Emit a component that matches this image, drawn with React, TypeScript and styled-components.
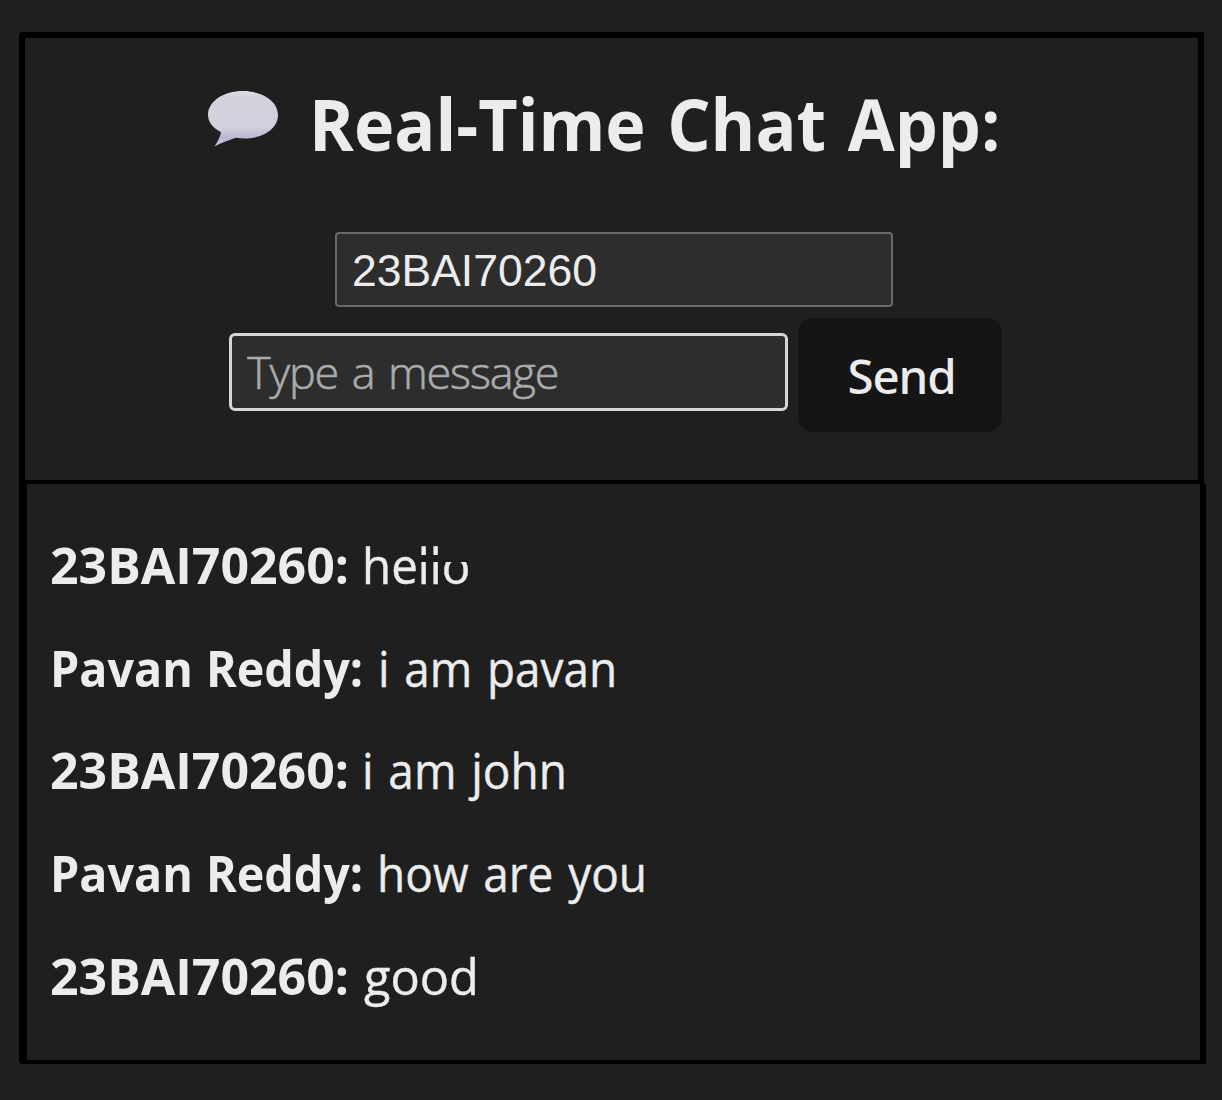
import React from "react";
import styled, { createGlobalStyle } from "styled-components";

const colors = {
  page: "#1f1f1f",
  field: "#2d2d2d",
  text: "#ececed",
  line: "#000000",
};

const GlobalStyle = createGlobalStyle`
  * { box-sizing: border-box; }
  body {
    margin: 0;
    background: ${colors.page};
    color: ${colors.text};
    font-family: "Open Sans", "Noto Sans", sans-serif;
  }
`;

const Page = styled.main`
  display: flex;
  flex-direction: column;
  align-items: flex-start;
  width: 1222px;
  height: 1100px;
  padding: 32px 0 0 19px;
  background: ${colors.page};
`;

const Header = styled.header`
  width: 1185px;
  height: 452px;
  padding-top: 37px;
  border: 6px solid ${colors.line};
  border-bottom-width: 4px;
  border-top-left-radius: 3px;
`;

const TitleRow = styled.div`
  display: flex;
  gap: 31px;
  height: 96px;
  padding-left: 183px;
`;

const Bubble = styled.svg`
  flex: none;
  width: 70px;
  height: 58px;
  margin-top: 15px;
`;

const Title = styled.h1`
  margin: 1px 0 0;
  font-size: 71px;
  font-weight: 700;
  line-height: 96px;
  word-spacing: 4px;
  white-space: nowrap;
  transform: scaleX(0.96);
  transform-origin: left;
`;

const NameRow = styled.div`
  display: flex;
  padding: 61px 0 0 310px;
`;

const ComposeRow = styled.div`
  display: flex;
  align-items: flex-start;
  gap: 10px;
  padding: 11px 0 0 204px;
`;

const Field = styled.input`
  height: 75px;
  width: 558px;
  padding: 3px 15px 0;
  border: 2px solid #686868;
  border-radius: 4px;
  outline: none;
  background: ${colors.field};
  color: ${colors.text};
  font: 400 44.5px "Liberation Sans", Arial, sans-serif;
`;

const MessageField = styled(Field)`
  width: 559px;
  height: 78px;
  margin-top: 15px;
  padding: 0 15px 1px;
  border: 3px solid #d6d6d6;
  border-radius: 6px;
  font: 300 45px "Open Sans", "Noto Sans", sans-serif;
  letter-spacing: -1.15px;
  word-spacing: 3px;

  &::placeholder {
    color: #a9abad;
    opacity: 1;
    -webkit-text-stroke: 0.6px #a9abad;
  }
`;

const SendButton = styled.button`
  width: 204px;
  height: 114px;
  padding: 0 0 0 3px;
  border: 0;
  border-radius: 15px;
  background: #151515;
  color: ${colors.text};
  font: 500 47.5px "Noto Sans", "Open Sans", sans-serif;
  letter-spacing: -1.1px;
`;

const Messages = styled.section`
  width: 1187px;
  height: 580px;
  padding: 30px 0 0 23px;
  border: 0 solid ${colors.line};
  border-width: 0 6px 4px 8px;
  border-bottom-left-radius: 4px;
`;

const MessageRow = styled.div`
  display: flex;
  height: 102.67px;
  font-size: 50px;
  line-height: 102.67px;
  white-space: nowrap;
`;

const Sender = styled.strong<{ $narrow?: boolean }>`
  flex: none;
  width: ${(p) => (p.$narrow ? 327 : 312)}px;
  font-weight: 700;
  word-spacing: 1px;
  transform: scaleX(${(p) => (p.$narrow ? 0.933 : 1)});
  transform-origin: left;
`;

const Body = styled.span<{ $scale: number; $indent?: number }>`
  position: relative;
  margin-left: ${(p) => p.$indent ?? 0}px;
  word-spacing: 3px;
  transform: scaleX(${(p) => p.$scale});
  transform-origin: left;
  -webkit-text-stroke: 0.4px ${colors.text};
`;

const Smudge = styled.i`
  position: absolute;
  top: 41px;
  left: 58px;
  width: 60px;
  height: 7px;
  background: #1e1e1e;
`;

interface Message {
  sender: string;
  text: string;
  scale: number;
  narrow?: boolean;
  indent?: number;
  smudged?: boolean;
}

const messages: Message[] = [
  { sender: "23BAI70260:", text: "hello", scale: 0.95, smudged: true },
  { sender: "Pavan Reddy:", narrow: true, text: "i am pavan", scale: 0.918, indent: 1 },
  { sender: "23BAI70260:", text: "i am john", scale: 0.92 },
  { sender: "Pavan Reddy:", narrow: true, text: "how are you", scale: 0.92 },
  { sender: "23BAI70260:", text: "good", scale: 0.975, indent: 1.5 },
];

const SpeechBubble = () => (
  <Bubble viewBox="0 0 70 58" aria-hidden="true">
    <defs>
      <linearGradient id="bubble" x1="0" y1="0" x2="0" y2="1">
        <stop offset="0" stopColor="#dedde5" />
        <stop offset="0.12" stopColor="#d4d2dd" />
        <stop offset="0.65" stopColor="#d2d0dd" />
        <stop offset="0.84" stopColor="#bdb8d2" />
        <stop offset="1" stopColor="#c6c3d8" />
      </linearGradient>
    </defs>
    <path
      fill="url(#bubble)"
      d="M35 1C54.500 1 70 11.300 70 25C70 38.500 55 48.500 37 48.500C33.800 48.500 30.800 48.200 28 47.800C21.500 49.800 13.500 52.800 6.500 56.500C9.700 52 12 47 13 42.200C5 38.200 0 32 0 25C0 11.300 15.500 1 35 1Z"
    />
  </Bubble>
);

export default function App() {
  return (
    <>
      <GlobalStyle />
      <Page>
        <Header>
          <TitleRow>
            <SpeechBubble />
            <Title>Real-Time Chat App:</Title>
          </TitleRow>
          <NameRow>
            <Field defaultValue="23BAI70260" aria-label="Name" />
          </NameRow>
          <ComposeRow>
            <MessageField placeholder="Type a message" />
            <SendButton>Send</SendButton>
          </ComposeRow>
        </Header>
        <Messages>
          {messages.map((m, i) => (
            <MessageRow key={i}>
              <Sender $narrow={m.narrow}>{m.sender}</Sender>
              <Body $scale={m.scale} $indent={m.indent}>
                {m.text}
                {m.smudged && <Smudge />}
              </Body>
            </MessageRow>
          ))}
        </Messages>
      </Page>
    </>
  );
}
